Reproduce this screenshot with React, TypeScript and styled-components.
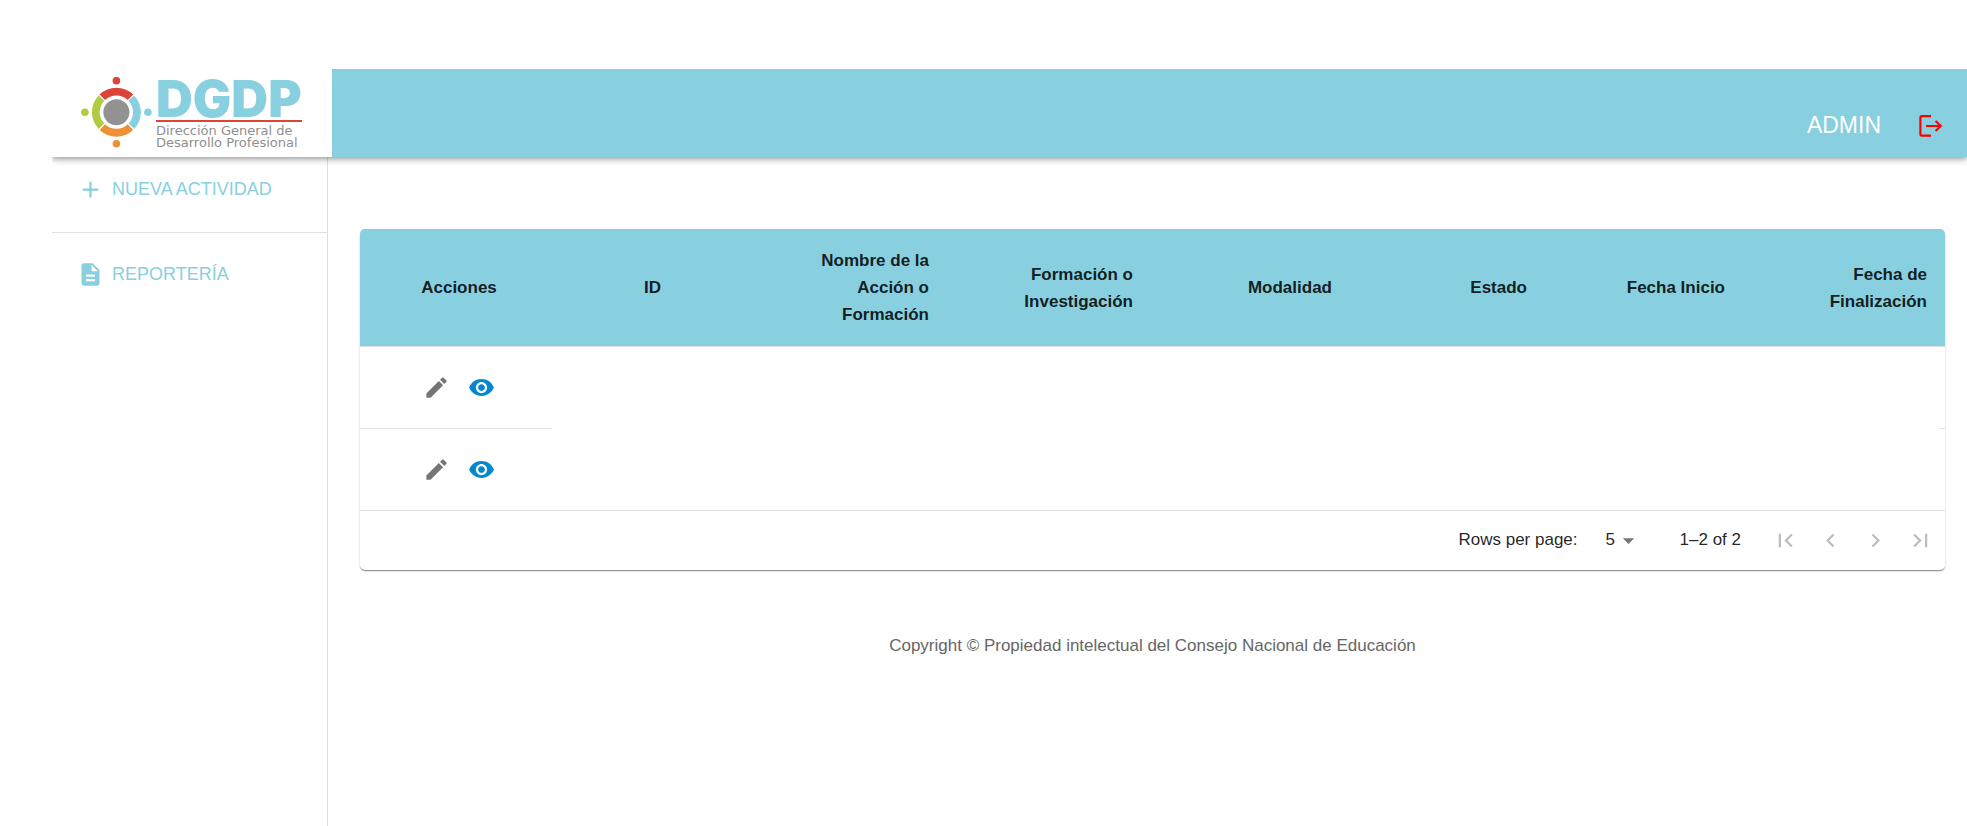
import React from "react";
import styled, { createGlobalStyle } from "styled-components";
import {
  MdAdd,
  MdArrowDropDown,
  MdDescription,
  MdEdit,
  MdFirstPage,
  MdKeyboardArrowLeft,
  MdKeyboardArrowRight,
  MdLastPage,
  MdVisibility,
} from "react-icons/md";

const brand = "#88cfdf";
const line = "#e0e0e0";

const GlobalStyle = createGlobalStyle`
  * { box-sizing: border-box; }
  body {
    margin: 0;
    background: #fff;
    color: rgba(0, 0, 0, 0.87);
    font-family: "Liberation Sans", Arial, sans-serif;
    font-size: 17px;
  }
  button, select { font: inherit; color: inherit; }
`;

const Page = styled.div`
  display: flex;
  flex-direction: column;
  min-height: 100vh;
  padding: 69px 0 0 52px;
`;

const Header = styled.header`
  position: relative;
  display: flex;
  height: 88px;
  box-shadow: 0 2px 4px -1px rgba(0, 0, 0, 0.2), 0 4px 5px rgba(0, 0, 0, 0.14),
    0 1px 10px rgba(0, 0, 0, 0.12);
  clip-path: inset(0 0 -20px 0);
`;

const Brand = styled.a`
  display: flex;
  width: 280px;
  padding: 8px 0 0 28px;
  background: #fff;
  text-decoration: none;
`;

const BrandMark = styled.svg`
  flex: none;
  width: 74px;
  height: 72px;
`;

const BrandText = styled.span`
  display: flex;
  flex-direction: column;
  width: 148px;
  padding-left: 2px;
`;

const BrandName = styled.strong`
  height: 45px;
  margin-bottom: 3px;
  border-bottom: 2px solid #db4437;
  color: ${brand};
  font-family: Inter, sans-serif;
  font-size: 51px;
  font-weight: 900;
  line-height: 44px;
`;

const BrandLine = styled.span`
  color: #8f8f8f;
  font-family: "DejaVu Sans", sans-serif;
  font-size: 13px;
  line-height: 12px;
  white-space: nowrap;
`;

const Toolbar = styled.div`
  display: flex;
  flex: 1;
  align-items: center;
  justify-content: flex-end;
  gap: 34px;
  padding: 26px 20px 0 0;
  background: ${brand};
  color: #fff;
`;

const UserName = styled.span`
  padding-bottom: 3px;
  font-size: 23px;
  line-height: 28px;
`;

const LogoutButton = styled.button`
  display: flex;
  padding: 0;
  border: 0;
  background: none;
  color: #f00;
  cursor: pointer;
`;

const Columns = styled.div`
  display: flex;
  flex: 1;
`;

const Sidebar = styled.nav`
  width: 276px;
  border-right: 1px solid ${line};
`;

const NavSection = styled.div`
  padding: 5px 0 16px;

  & + & {
    padding-top: 14px;
    border-top: 1px solid ${line};
  }
`;

const NavLink = styled.a`
  display: flex;
  align-items: center;
  gap: 8px;
  height: 54px;
  padding-left: 25px;
  color: ${brand};
  font-size: 18px;
  text-decoration: none;
`;

const Main = styled.main`
  flex: 1;
  padding: 72px 22px 0 32px;
`;

const Card = styled.section`
  overflow: hidden;
  border-radius: 5px;
  box-shadow: 0 2px 1px -1px rgba(0, 0, 0, 0.2), 0 1px 1px rgba(0, 0, 0, 0.24),
    0 1px 3px rgba(0, 0, 0, 0.12);
`;

const Table = styled.table`
  width: 100%;
  border-collapse: separate;
  border-spacing: 0;
  table-layout: fixed;
`;

const HeadCell = styled.th<{ $align: "center" | "right" }>`
  height: 118px;
  padding: 18px;
  border-bottom: 1px solid ${line};
  background: ${brand};
  line-height: 27px;
  text-align: ${(p) => p.$align};
`;

const HeadLabel = styled.span`
  display: inline-block;
  max-width: 100%;
  vertical-align: top;
`;

const NarrowLabel = styled(HeadLabel)`
  max-width: 120px;
`;

const Cell = styled.td`
  height: 82px;
  padding: 0;
  border-bottom: 1px solid ${line};
  text-align: center;
`;

const BlankCell = styled(Cell)`
  position: relative;

  tr:not(:last-child) > &::after {
    content: "";
    position: absolute;
    inset: 0 6px -1px -6px;
    background: #fff;
  }
`;

const Actions = styled.div`
  display: flex;
  justify-content: center;
`;

const IconButton = styled.button<{ $color: string }>`
  display: flex;
  padding: 9px;
  border: 0;
  background: none;
  color: ${(p) => p.$color};
`;

const Pagination = styled.footer`
  display: flex;
  align-items: center;
  justify-content: flex-end;
  height: 59px;
  padding-right: 2px;
`;

const SelectBox = styled.label`
  display: flex;
  align-items: center;
  gap: 28px;
  line-height: 25px;
`;

const SelectWrap = styled.span`
  position: relative;
  display: flex;

  svg {
    position: absolute;
    right: 0;
    top: 0;
    color: #757575;
    pointer-events: none;
  }
`;

const Select = styled.select`
  width: 36px;
  height: 27px;
  padding: 0 0 4px;
  border: 0;
  background: none;
  appearance: none;
`;

const Range = styled.span`
  margin: 0 22px 0 38px;
  padding-bottom: 2px;
`;

const RowsLabel = styled.span`
  padding-bottom: 2px;
`;

const Copyright = styled.p`
  margin: 62px 0 0;
  color: #666;
  line-height: 27px;
  text-align: center;
`;

type Column = { label: string; width: number; align: "center" | "right"; narrow?: boolean };

const columns: Column[] = [
  { label: "Acciones", width: 198, align: "center" },
  { label: "ID", width: 189, align: "center" },
  { label: "Nombre de la Acción o Formación", width: 200, align: "right", narrow: true },
  { label: "Formación o Investigación", width: 204, align: "right" },
  { label: "Modalidad", width: 199, align: "right" },
  { label: "Estado", width: 195, align: "right" },
  { label: "Fecha Inicio", width: 198, align: "right" },
  { label: "Fecha de Finalización", width: 202, align: "right" },
];

const pagers = [
  { label: "First page", Icon: MdFirstPage },
  { label: "Previous page", Icon: MdKeyboardArrowLeft },
  { label: "Next page", Icon: MdKeyboardArrowRight },
  { label: "Last page", Icon: MdLastPage },
];

function Mark() {
  const arc = "M-16.8 -17.8A24.5 24.5 0 0 1 16.8 -17.8L11.4 -12.1A16.6 16.6 0 0 0 -11.4 -12.1Z";
  return (
    <BrandMark viewBox="-36.4 -35.2 74 72" aria-hidden="true">
      <path d={arc} fill="#db4437" />
      <path d={arc} fill={brand} transform="rotate(90)" />
      <path d={arc} fill="#f09035" transform="rotate(180)" />
      <path d={arc} fill="#b1cb43" transform="rotate(270)" />
      <circle r="13" fill="#929292" />
      <circle cy="-31.5" r="3.8" fill="#db4437" />
      <circle cx="31.5" r="3.8" fill={brand} />
      <circle cy="31.5" r="3.8" fill="#f09035" />
      <circle cx="-31.5" r="3.8" fill="#b1cb43" />
    </BrandMark>
  );
}

export default function App() {
  return (
    <>
      <GlobalStyle />
      <Page>
        <Header>
          <Brand href="#">
            <Mark />
            <BrandText>
              <BrandName>DGDP</BrandName>
              <BrandLine>Dirección General de</BrandLine>
              <BrandLine>Desarrollo Profesional</BrandLine>
            </BrandText>
          </Brand>
          <Toolbar>
            <UserName>ADMIN</UserName>
            <LogoutButton type="button" aria-label="Cerrar sesión">
              <svg width="32" height="28" viewBox="0 0 32 28" fill="none" stroke="currentColor" strokeWidth="2.2">
                <path d="M16 4.2H6.8Q5.4 4.2 5.4 5.6V22.2Q5.4 23.6 6.8 23.6H16" />
                <path d="M11 14H26M20.6 9L25.8 14L20.6 19" />
              </svg>
            </LogoutButton>
          </Toolbar>
        </Header>
        <Columns>
          <Sidebar>
            <NavSection>
              <NavLink href="#nueva">
                <MdAdd size={27} />
                NUEVA ACTIVIDAD
              </NavLink>
            </NavSection>
            <NavSection>
              <NavLink href="#reporteria">
                <MdDescription size={27} />
                REPORTERÍA
              </NavLink>
            </NavSection>
          </Sidebar>
          <Main>
            <Card>
              <Table>
                <colgroup>
                  {columns.map((c) => (
                    <col key={c.label} width={c.width} />
                  ))}
                </colgroup>
                <thead>
                  <tr>
                    {columns.map((c) => {
                      const Label = c.narrow ? NarrowLabel : HeadLabel;
                      return (
                        <HeadCell key={c.label} $align={c.align} scope="col">
                          <Label>{c.label}</Label>
                        </HeadCell>
                      );
                    })}
                  </tr>
                </thead>
                <tbody>
                  {[1, 2].map((id) => (
                    <tr key={id}>
                      <Cell>
                        <Actions>
                          <IconButton type="button" aria-label="Editar" $color="#757575">
                            <MdEdit size={27} />
                          </IconButton>
                          <IconButton type="button" aria-label="Ver" $color="#0288d1">
                            <MdVisibility size={27} />
                          </IconButton>
                        </Actions>
                      </Cell>
                      <BlankCell colSpan={7} />
                    </tr>
                  ))}
                </tbody>
              </Table>
              <Pagination>
                <SelectBox>
                  <RowsLabel>Rows per page:</RowsLabel>
                  <SelectWrap>
                    <Select defaultValue="5">
                      <option>5</option>
                      <option>10</option>
                      <option>25</option>
                    </Select>
                    <MdArrowDropDown size={27} />
                  </SelectWrap>
                </SelectBox>
                <Range>1–2 of 2</Range>
                {pagers.map(({ label, Icon }) => (
                  <IconButton key={label} type="button" aria-label={label} disabled $color="#bdbdbd">
                    <Icon size={27} />
                  </IconButton>
                ))}
              </Pagination>
            </Card>
            <Copyright>Copyright © Propiedad intelectual del Consejo Nacional de Educación</Copyright>
          </Main>
        </Columns>
      </Page>
    </>
  );
}
